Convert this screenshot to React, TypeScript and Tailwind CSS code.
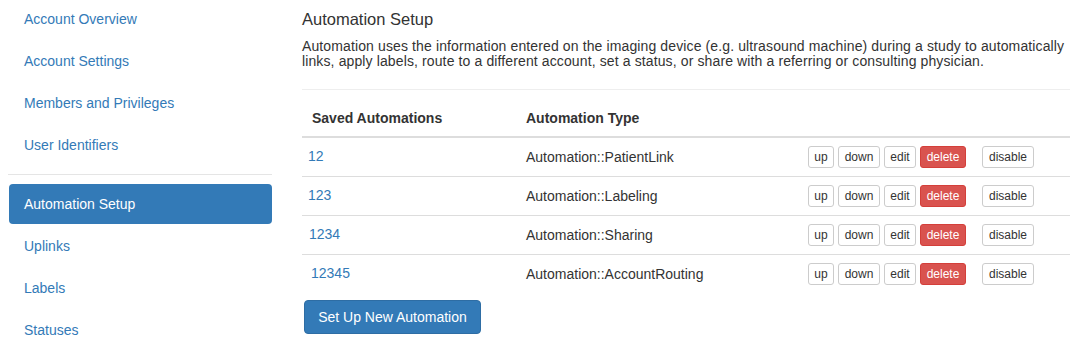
const navTop = ['Account Overview', 'Account Settings', 'Members and Privileges', 'User Identifiers']
const navBottom = ['Uplinks', 'Labels', 'Statuses']

const automations = [
    { id: '12', type: 'Automation::PatientLink', idPad: 'pl-[6px]' },
    { id: '123', type: 'Automation::Labeling', idPad: 'pl-[6px]' },
    { id: '1234', type: 'Automation::Sharing', idPad: 'pl-[7px]' },
    { id: '12345', type: 'Automation::AccountRouting', idPad: 'pl-[9px]' },
]

function SmallButton({ label, width, danger }: { label: string; width: string; danger?: boolean }) {
    return (
        <button
            className={
                danger
                    ? `h-[22px] ${width} rounded-[3px] border border-[#d43f3a] bg-[#d9534f] text-[12px] leading-[18px] text-white`
                    : `h-[22px] ${width} rounded-[3px] border border-[#ccc] bg-white text-[12px] leading-[18px] text-[#333]`
            }
        >
            {label}
        </button>
    )
}

export default function App() {
    return (
        <div className="w-[1070px] h-[338px] overflow-hidden bg-white text-[14px] text-[#333] flex font-['Liberation_Sans',Arial,sans-serif]">
            {/* sidebar */}
            <div className="w-[302px] shrink-0 pl-[9px] pr-[30px]">
                <ul className="-mt-px flex flex-col gap-[2px]">
                    {navTop.map((item) => (
                        <li key={item} className="h-[40px] px-[15px] py-[10px] leading-[20px] text-[#337ab7]">
                            {item}
                        </li>
                    ))}
                </ul>
                <div className="h-px bg-[#e5e5e5] -ml-px mt-[9px] mb-[9px]" />
                <ul className="flex flex-col gap-[2px]">
                    <li className="h-[40px] px-[15px] py-[10px] leading-[20px] rounded-[4px] bg-[#337ab7] text-white">
                        Automation Setup
                    </li>
                    {navBottom.map((item) => (
                        <li key={item} className="h-[40px] px-[15px] py-[10px] leading-[20px] text-[#337ab7]">
                            {item}
                        </li>
                    ))}
                </ul>
            </div>

            {/* main */}
            <div className="flex-1 min-w-0">
                <h4 className="mt-[9px] text-[16.5px] leading-[20px] font-normal">Automation Setup</h4>
                <p className="mt-[10px] leading-[15px] tracking-[0.12px]">
                    <span className="block whitespace-nowrap">
                        Automation uses the information entered on the imaging device (e.g. ultrasound machine) during a study to automatically
                    </span>
                    <span className="block whitespace-nowrap">
                        links, apply labels, route to a different account, set a status, or share with a referring or consulting physician.
                    </span>
                </p>
                <div className="mt-[20px] h-px bg-[#eee]" />

                {/* table */}
                <div className="mt-[10px]">
                    <div className="grid grid-cols-[216px_282px_174px_1fr] h-[38px] border-b-2 border-[#ddd] font-bold leading-[20px]">
                        <div className="pl-[10px] py-[8px]">Saved Automations</div>
                        <div className="pl-2 py-[8px]">Automation Type</div>
                        <div />
                        <div />
                    </div>
                    {automations.map((row, i) => (
                        <div
                            key={row.id}
                            className={`grid grid-cols-[216px_282px_174px_1fr] items-center h-[38px] ${i > 0 ? 'border-t border-[#ddd] h-[39px]' : ''}`}
                        >
                            <div className={`${row.idPad} leading-[20px] text-[#337ab7] -mt-[2px]`}>{row.id}</div>
                            <div className="pl-2 leading-[20px]">{row.type}</div>
                            <div className="pl-2 flex gap-1">
                                <SmallButton label="up" width="w-[26px]" />
                                <SmallButton label="down" width="w-[42px]" />
                                <SmallButton label="edit" width="w-[32px]" />
                                <SmallButton label="delete" width="w-[46px]" danger />
                            </div>
                            <div className="pl-2">
                                <SmallButton label="disable" width="w-[52px]" />
                            </div>
                        </div>
                    ))}
                </div>

                <button className="mt-[7px] ml-[2px] h-[34px] w-[177px] rounded-[4px] border border-[#2e6da4] bg-[#337ab7] text-white leading-[20px]">
                    Set Up New Automation
                </button>
            </div>
        </div>
    )
}
